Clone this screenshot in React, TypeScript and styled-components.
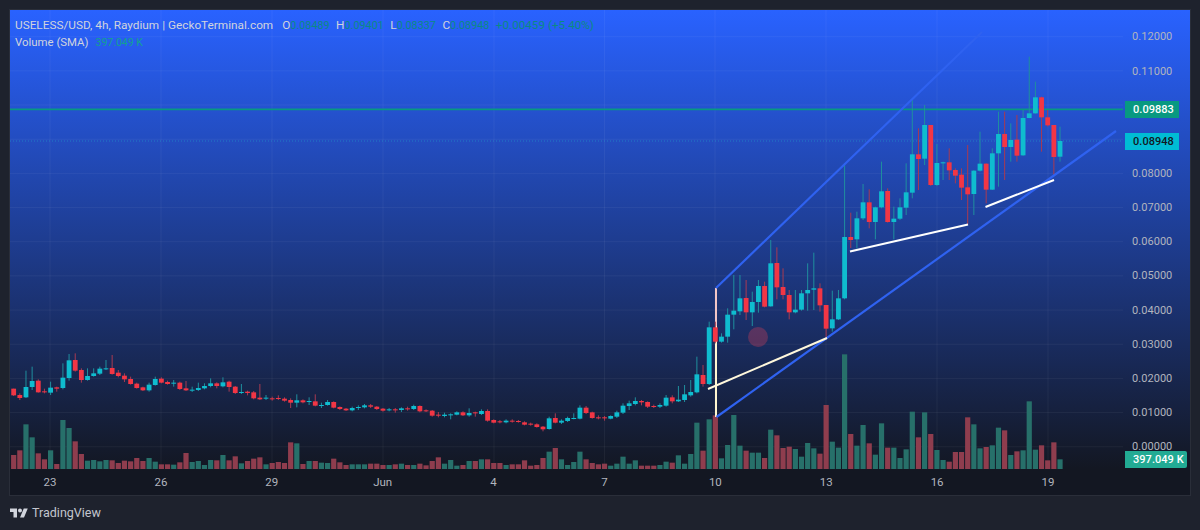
import React from "react";
import styled, { createGlobalStyle } from "styled-components";

const UP = "#0fbccf";
const DOWN = "#f23645";
const UP_WICK = "#1f8f9e";
const DOWN_WICK = "#a83a52";
const UP_VOL = "#27706a";
const DOWN_VOL = "#8f3d4e";

type Row = [0 | 1, number, number, number, number, number];
// [direction, body top, body bottom, wick top, wick bottom, volume top]
interface Segment { y: number; v: number; rows: Row[] }

const segments: Segment[] = [
  { y: 340, v: 340, rows: [
    [0,146,166,146,168,345],[0,165,174,160,180,331],[1,141,172,92,174,253],[1,123,141,80,150,292],[0,122,157,118,158,340],
    [0,154,157,146,160,358],[1,143,158,125,165,331],[0,142,146,140,155,372],[1,113,144,70,148,240],[1,61,114,42,122,264],
    [0,60,92,40,95,304],[0,90,120,85,128,342],[1,108,120,85,122,362],[1,100,108,85,110,360],[1,86,101,80,105,364],
    [1,85,87,60,90,360],[0,84,102,45,104,361],[0,98,108,90,112,369],[0,107,118,100,126,362],[0,117,132,110,134,364],
    [0,131,144,128,146,354],[0,142,151,140,153,363],[1,134,151,128,155,354],[1,117,135,110,137,365],[0,116,128,112,130,373],
    [0,126,132,122,134,373],[1,128,131,120,140,374],[0,128,147,125,150,367],[0,145,151,123,153,339],[1,149,151,140,156,366],
    [1,144,150,128,153,363],[1,138,145,130,148,375],[1,130,138,115,142,360],[0,130,138,127,145,361],[1,127,139,112,142,345],
    [0,125,141,122,155,361],[0,140,159,138,162,349],[1,156,159,132,162,370],[0,155,159,152,166,363],[0,157,175,153,178,356],
    [0,173,178,132,180,352],[1,173,176,165,180,373],[0,175,176,170,182,369],[0,174,176,166,180,366],[0,176,182,172,185,369],
    [0,180,188,175,204,307],[1,181,188,163,202,310],[0,181,187,178,190,372],[1,183,186,172,195,363],[0,184,197,163,199,363],
    [1,195,198,188,204,368],[1,186,195,180,197,369],[0,186,203,184,205,356],[0,201,207,199,210,367],[0,206,211,204,213,375],
  ]},
  { y: 380, v: 380, rows: [
    [1,84,91,80,94,253],[1,81,83,76,90,253],[1,76,82,72,85,253],[0,76,80,72,84,251],[0,80,87,78,90,251],
    [0,86,92,84,95,255],[1,88,90,84,94,255],[0,88,90,84,98,253],[1,85,90,82,96,251],[0,85,88,80,92,255],
    [1,78,87,74,90,255],[0,78,94,76,97,251],[0,91,93,88,96,256],[0,92,107,90,110,243],[0,104,106,96,112,232],
    [1,104,108,98,112,251],[1,103,105,100,118,240],[1,97,104,94,106,257],[0,97,106,94,108,255],[1,99,106,85,110,243],
    [0,97,99,95,110,243],[1,93,102,88,105,238],[0,93,122,88,125,238],[0,120,128,118,130,249],[0,124,127,120,130,249],
    [1,122,127,118,130,255],[0,122,125,118,128,253],[0,123,125,120,128,253],[0,127,134,124,136,241],[0,131,134,128,137,257],
    [0,133,141,130,143,255],[0,140,148,138,154,234],[1,115,147,110,149,215],[0,114,128,100,130,204],[1,122,128,118,132,238],
    [1,114,123,110,126,255],[1,114,117,100,118,246],[1,83,116,76,118,215],[0,83,99,78,102,238],[0,97,114,95,116,249],
    [0,112,114,106,118,253],[0,112,115,108,122,251],[1,108,116,106,118,257],[1,97,110,92,114,251],[1,77,98,70,102,230],
    [1,70,78,62,90,251],[1,63,72,52,76,241],[0,63,67,60,76,257],[0,66,80,64,84,257],[0,78,81,74,84,257],
    [1,75,80,70,84,255],[1,53,77,45,80,245],[0,52,64,46,70,248],[1,59,64,18,66,226],[1,43,60,15,66,251],[1,36,46,0,50,222],
  ]},
  { y: 240, v: 240, rows: [
    [1,403,457,350,460,548],[0,405,432,375,440,632],[1,262,432,245,435,538],[0,262,305,245,310,526],[1,290,305,280,308,655],
    [1,224,290,205,308,615],[1,212,224,105,268,525],[1,175,214,105,225,617],[0,174,217,120,240,632],[1,186,217,155,258,638],
    [1,138,186,120,218,638],[0,138,200,125,202,654],[1,70,199,0,200,569],[0,69,142,22,178,586],[0,141,165,85,178,624],
    [0,165,217,150,238,620],[1,209,217,150,220,627],[1,160,209,150,212,650],[1,150,160,70,212,609],[1,145,149,38,210,625],
    [0,145,196,130,215,641],[0,195,266,195,295,495],[1,238,265,152,275,605],[1,175,238,150,240,623],[1,-9,175,-231,178,343],
  ]},
  { y: 30, v: 240, rows: [
    [0,621,630,548,654,582],[1,565,628,545,655,617],[1,517,565,462,570,555],[0,517,576,478,595,610],[1,532,576,530,628,644],
    [1,484,532,395,535,550],[0,483,576,475,578,623],[1,566,576,530,628,623],[1,532,566,505,570,654],[1,487,533,400,555,628],
    [1,373,488,205,505,515],[0,373,387,295,480,592],[1,285,386,225,405,517],[0,285,465,285,468,582],[1,399,465,342,468,630],
    [1,397,400,395,450,660],
  ]},
  { y: 30, v: 390, rows: [
    [0,397,421,355,450,215],[0,420,437,415,460,186],[0,434,473,415,510,186],[0,472,493,345,585,82],[1,422,492,420,555,103],
    [1,401,422,305,425,175],[0,401,479,400,520,171],[1,370,479,355,480,166],[1,312,370,245,470,113],[0,312,351,245,450,121],
    [1,330,351,280,395,195],[0,329,377,255,395,184],[1,264,376,240,378,181],[1,250,264,80,265,34],[1,202,250,155,252,179],
    [0,202,262,200,365,166],[0,262,286,240,290,211],[0,285,381,285,435,157],[1,333,380,290,395,208],
  ]},
];

const PANE_BOTTOM = 469.3;
const candles = segments.flatMap((s) =>
  s.rows.map(([dir, top, bottom, hi, lo, vol]) => ({
    up: dir === 1,
    top: s.y + top / 3,
    bottom: s.y + bottom / 3,
    hi: s.y + hi / 3,
    lo: s.y + lo / 3,
    vol: s.v + vol / 3,
  })),
);
const xOf = (i: number) => 13.67 + i * 6.155;

// The 0.10000 and 0.09000 levels sit behind the two price badges, so their slots stay empty.
const prices = ["0.12000","0.11000","","","0.08000","0.07000","0.06000","0.05000","0.04000","0.03000","0.02000","0.01000","0.00000"];
const dates = ["23","26","29","Jun","4","7","10","13","16","19"];
const gridX = [50, 161, 272, 383, 494, 604.5, 715, 826, 937, 1048];
const gridY = Array.from({ length: 13 }, (_, i) => 36.7 + i * 34.17);
const ohlc: [string, string][] = [["O","0.08489"],["H","0.09401"],["L","0.08337"],["C","0.08948"]];

const Global = createGlobalStyle`
  html, body { margin: 0; background: #1e222d; }
  body { font-family: "Roboto", "Liberation Sans", sans-serif; }
`;

const Page = styled.div`
  width: 1200px;
  height: 530px;
  box-sizing: border-box;
  padding: 10px 10px 0;
  display: flex;
  flex-direction: column;
  overflow: hidden;
`;
const Chart = styled.div`
  display: flex;
  flex-direction: column;
  box-shadow: 0 0 0 1px #2a2e39;
`;
const Pane = styled.div`
  position: relative;
  height: 459px;
  display: flex;
  background: linear-gradient(180deg, #2962ff 0%, #131722 100%);
`;
const Plot = styled.svg`
  display: block;
  flex: 0 0 1113px;
  height: 459px;
`;
const PriceAxis = styled.div`
  flex: 1;
  padding: 10.4px 0 0 9px;
  display: flex;
  flex-direction: column;
`;
const PriceLabel = styled.div`
  height: 34.17px;
  line-height: 34.17px;
  font-size: 11px;
  letter-spacing: 0.05px;
  color: #b2b5be;
`;
const Badge = styled.div<{ $top: number; $bg: string; $fg: string; $wide?: boolean }>`
  position: absolute;
  left: 1115px;
  top: ${(p) => p.$top}px;
  width: ${(p) => (p.$wide ? 62 : 54)}px;
  height: 17px;
  box-sizing: border-box;
  padding-left: 8px;
  line-height: 17px;
  font-size: 11px;
  font-weight: 500;
  letter-spacing: 0.05px;
  white-space: nowrap;
  color: ${(p) => p.$fg};
  background: ${(p) => p.$bg};
  border-radius: ${(p) => (p.$wide ? "0 2px 2px 0" : "0")};
`;
const Legend = styled.div`
  position: absolute;
  left: 5px;
  top: 8.5px;
  display: flex;
  flex-direction: column;
  gap: 4px;
  font-size: 11.8px;
  line-height: 12px;
  color: #d1d4dc;
`;
const LegendRow = styled.div`
  display: flex;
  align-items: baseline;
  white-space: nowrap;
`;
const LegendTitle = styled.span`
  margin-right: 9px;
`;
const LegendPair = styled.span`
  margin-right: 6.5px;
`;
const LegendValue = styled.span`
  font-size: 10.8px;
  color: #0a8a84;
`;
const LegendChange = styled(LegendValue)`
  font-size: 11.7px;
`;
const VolumeLabel = styled.span`
  font-size: 11.4px;
`;
const VolumeValue = styled.span`
  margin-left: 7px;
  font-size: 10.5px;
  color: #12a192;
`;
const TimeAxis = styled.div`
  height: 26px;
  padding-left: 40px;
  display: flex;
  align-items: center;
  background: #131722;
`;
const Tick = styled.span`
  flex: 0 0 0;
  width: 0;
  margin-right: 110.9px;
  display: flex;
  justify-content: center;
  font-size: 11.5px;
  color: #b2b5be;
`;
const Footer = styled.div`
  height: 35px;
  display: flex;
  align-items: center;
  gap: 4px;
  color: #c3c6ce;
  font-size: 12.5px;
`;
const Logo = styled.svg`
  display: block;
  width: 18px;
  height: 10px;
  fill: #d1d4dc;
`;

export default function App() {
  return (
    <Page>
      <Global />
      <Chart>
        <Pane>
          <Plot viewBox="10 10 1113 459">
            {gridY.map((y) => (
              <line key={y} x1="10" x2="1123" y1={y} y2={y} stroke="rgba(255,255,255,0.05)" />
            ))}
            {gridX.map((x) => (
              <line key={x} x1={x} x2={x} y1="10" y2="469" stroke="rgba(255,255,255,0.05)" />
            ))}
            {candles.map((c, i) => (
              <rect key={i} x={xOf(i) - 2.6} y={c.vol} width="5.2" height={PANE_BOTTOM - c.vol} fill={c.up ? UP_VOL : DOWN_VOL} />
            ))}
            <line x1="10" x2="1123" y1="109.4" y2="109.4" stroke="#089981" strokeWidth="1.8" />
            <line x1="10" x2="1123" y1="141" y2="141" stroke="#1fb6cf" strokeOpacity="0.45" strokeDasharray="1 2" />
            <line x1="716" y1="288" x2="716" y2="326" stroke="#f2c6c6" strokeWidth="2" />
            <line x1="716" y1="326" x2="716" y2="417" stroke="#fff6cf" strokeWidth="2" />
            {candles.map((c, i) => (
              <g key={i}>
                <line x1={xOf(i)} x2={xOf(i)} y1={c.hi} y2={c.lo} stroke={c.up ? UP_WICK : DOWN_WICK} />
                <rect x={xOf(i) - 2.4} y={c.top} width="4.8" height={Math.max(c.bottom - c.top, 1)} fill={c.up ? UP : DOWN} />
              </g>
            ))}
            <circle cx="758" cy="337" r="10" fill="#e0405a" fillOpacity="0.32" />
            <line x1="716" y1="288" x2="982" y2="32" stroke="#2f62f0" strokeWidth="2.2" />
            <line x1="716.5" y1="417" x2="1116" y2="131" stroke="#2f62f0" strokeWidth="2.2" />
            <line x1="708" y1="389" x2="827" y2="338" stroke="#fff8dc" strokeWidth="2" />
            <line x1="850" y1="251.5" x2="968" y2="224.5" stroke="#ffffff" strokeWidth="2" />
            <line x1="985.5" y1="207" x2="1054" y2="180" stroke="#ffffff" strokeWidth="2" />
          </Plot>
          <PriceAxis>
            {prices.map((p, i) => <PriceLabel key={i}>{p}</PriceLabel>)}
          </PriceAxis>
          <Badge $top={91} $bg="#089981" $fg="#ffffff">0.09883</Badge>
          <Badge $top={123} $bg="#00bcd4" $fg="#131722">0.08948</Badge>
          <Badge $top={441} $bg="#22ab94" $fg="#ffffff" $wide>397.049 K</Badge>
          <Legend>
            <LegendRow>
              <LegendTitle>USELESS/USD, 4h, Raydium | GeckoTerminal.com</LegendTitle>
              {ohlc.map(([k, v]) => (
                <LegendPair key={k}>{k}<LegendValue>{v}</LegendValue></LegendPair>
              ))}
              <LegendChange>+0.00459 (+5.40%)</LegendChange>
            </LegendRow>
            <LegendRow>
              <VolumeLabel>Volume (SMA)</VolumeLabel><VolumeValue>397.049 K</VolumeValue>
            </LegendRow>
          </Legend>
        </Pane>
        <TimeAxis>
          {dates.map((d) => <Tick key={d}>{d}</Tick>)}
        </TimeAxis>
      </Chart>
      <Footer>
        <Logo viewBox="0 3 36 20">
          <path d="M14 22H7V11H0V4h14v18zM28 22h-8l7.5-18h8L28 22z" />
          <circle cx="20" cy="8" r="4" />
        </Logo>
        TradingView
      </Footer>
    </Page>
  );
}
